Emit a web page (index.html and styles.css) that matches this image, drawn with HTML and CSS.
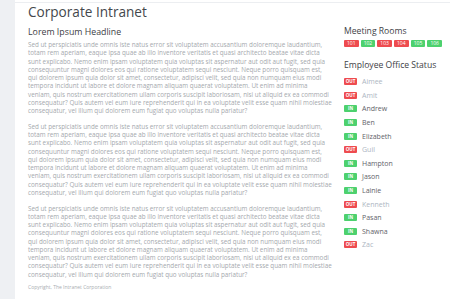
FILE: index.html
```html
<!DOCTYPE html>
<html>
<head>
<meta charset="utf-8">
<link rel="stylesheet" href="styles.css">
</head>
<body>
<div class="page">
  <aside class="side"></aside>
  <div class="wrap">
    <div class="topline"></div>
    <div class="content">
      <main class="main">
        <h1 class="title">Corporate Intranet</h1>
        <h2 class="headline">Lorem Ipsum Headline</h2>
        <p class="para">Sed ut perspiciatis unde omnis iste natus error sit voluptatem accusantium doloremque laudantium, totam rem aperiam, eaque ipsa quae ab illo inventore veritatis et quasi architecto beatae vitae dicta sunt explicabo. Nemo enim ipsam voluptatem quia voluptas sit aspernatur aut odit aut fugit, sed quia consequuntur magni dolores eos qui ratione voluptatem sequi nesciunt. Neque porro quisquam est, qui dolorem ipsum quia dolor sit amet, consectetur, adipisci velit, sed quia non numquam eius modi tempora incidunt ut labore et dolore magnam aliquam quaerat voluptatem. Ut enim ad minima veniam, quis nostrum exercitationem ullam corporis suscipit laboriosam, nisi ut aliquid ex ea commodi consequatur? Quis autem vel eum iure reprehenderit qui in ea voluptate velit esse quam nihil molestiae consequatur, vel illum qui dolorem eum fugiat quo voluptas nulla pariatur?</p>
        <p class="para">Sed ut perspiciatis unde omnis iste natus error sit voluptatem accusantium doloremque laudantium, totam rem aperiam, eaque ipsa quae ab illo inventore veritatis et quasi architecto beatae vitae dicta sunt explicabo. Nemo enim ipsam voluptatem quia voluptas sit aspernatur aut odit aut fugit, sed quia consequuntur magni dolores eos qui ratione voluptatem sequi nesciunt. Neque porro quisquam est, qui dolorem ipsum quia dolor sit amet, consectetur, adipisci velit, sed quia non numquam eius modi tempora incidunt ut labore et dolore magnam aliquam quaerat voluptatem. Ut enim ad minima veniam, quis nostrum exercitationem ullam corporis suscipit laboriosam, nisi ut aliquid ex ea commodi consequatur? Quis autem vel eum iure reprehenderit qui in ea voluptate velit esse quam nihil molestiae consequatur, vel illum qui dolorem eum fugiat quo voluptas nulla pariatur?</p>
        <p class="para">Sed ut perspiciatis unde omnis iste natus error sit voluptatem accusantium doloremque laudantium, totam rem aperiam, eaque ipsa quae ab illo inventore veritatis et quasi architecto beatae vitae dicta sunt explicabo. Nemo enim ipsam voluptatem quia voluptas sit aspernatur aut odit aut fugit, sed quia consequuntur magni dolores eos qui ratione voluptatem sequi nesciunt. Neque porro quisquam est, qui dolorem ipsum quia dolor sit amet, consectetur, adipisci velit, sed quia non numquam eius modi tempora incidunt ut labore et dolore magnam aliquam quaerat voluptatem. Ut enim ad minima veniam, quis nostrum exercitationem ullam corporis suscipit laboriosam, nisi ut aliquid ex ea commodi consequatur? Quis autem vel eum iure reprehenderit qui in ea voluptate velit esse quam nihil molestiae consequatur, vel illum qui dolorem eum fugiat quo voluptas nulla pariatur?</p>
        <footer class="copy">Copyright, The Intranet Corporation</footer>
      </main>
      <section class="aside">
        <h3 class="sub">Meeting Rooms</h3>
        <div class="rooms">
          <span class="badge red">101</span>
          <span class="badge green">102</span>
          <span class="badge red">103</span>
          <span class="badge red">104</span>
          <span class="badge green">105</span>
          <span class="badge green">106</span>
        </div>
        <h3 class="sub sub2">Employee Office Status</h3>
        <ul class="staff">
          <li class="row out"><span class="tag red">OUT</span>Aimee</li>
          <li class="row out"><span class="tag red">OUT</span>Amit</li>
          <li class="row in"><span class="tag green">IN</span>Andrew</li>
          <li class="row in"><span class="tag green">IN</span>Ben</li>
          <li class="row in"><span class="tag green">IN</span>Elizabeth</li>
          <li class="row out"><span class="tag red">OUT</span>Guil</li>
          <li class="row in"><span class="tag green">IN</span>Hampton</li>
          <li class="row in"><span class="tag green">IN</span>Jason</li>
          <li class="row in"><span class="tag green">IN</span>Lainie</li>
          <li class="row out"><span class="tag red">OUT</span>Kenneth</li>
          <li class="row in"><span class="tag green">IN</span>Pasan</li>
          <li class="row in"><span class="tag green">IN</span>Shawna</li>
          <li class="row out"><span class="tag red">OUT</span>Zac</li>
        </ul>
      </section>
    </div>
  </div>
</div>
</body>
</html>
```

FILE: styles.css
```css
html, body {
  margin: 0;
  padding: 0;
  background: #fff;
}
body {
  font-family: "Open Sans", "DejaVu Sans", sans-serif;
  width: 450px;
  height: 299px;
  overflow: hidden;
}
.page {
  display: flex;
  height: 299px;
}
.side {
  width: 15px;
  flex: none;
  background: #eef0f3;
}
.wrap {
  flex: 1;
  display: flex;
  flex-direction: column;
}
.topline {
  height: 2px;
  border-bottom: 1px solid #eceef1;
}
.content {
  display: flex;
  padding: 0 0 0 13px;
}
.main {
  width: 304px;
  flex: none;
}
.title {
  margin: 1px 0 0;
  font-size: 13.6px;
  font-weight: 400;
  color: #44474c;
  line-height: 16px;
}
.headline {
  margin: 7px 0 0;
  font-size: 8.8px;
  font-weight: 400;
  color: #3e4146;
  line-height: 11px;
}
.para {
  margin: 3px 0 0;
  font-size: 6.3px;
  line-height: 8.25px;
  color: #a5a9ae;
}
.para + .para {
  margin-top: 7.5px;
}
.copy {
  margin-top: 5px;
  font-size: 5px;
  color: #a9adb2;
}
.aside {
  margin-left: 12px;
  flex: 1;
}
.sub {
  margin: 23px 0 0;
  font-size: 8.6px;
  font-weight: 400;
  color: #3e4146;
  line-height: 11px;
}
.sub2 {
  margin-top: 13px;
}
.rooms {
  display: flex;
  gap: 2.2px;
  margin-top: 3px;
}
.badge {
  width: 14.5px;
  height: 7px;
  font-size: 5px;
  line-height: 7px;
  text-align: center;
  color: #fff;
  border-radius: 1px;
}
.red { background: #ee4b4f; }
.green { background: #4dd16e; }
.staff {
  list-style: none;
  margin: 4px 0 0;
  padding: 0;
}
.row {
  display: flex;
  align-items: center;
  height: 13.6px;
  font-size: 7px;
}
.tag {
  width: 13px;
  height: 7px;
  line-height: 7px;
  font-size: 4.5px;
  font-weight: 700;
  text-align: center;
  color: #fff;
  margin-right: 5px;
  border-radius: 1px;
}
.in { color: #5f636a; }
.out { color: #adb6c2; }
```
